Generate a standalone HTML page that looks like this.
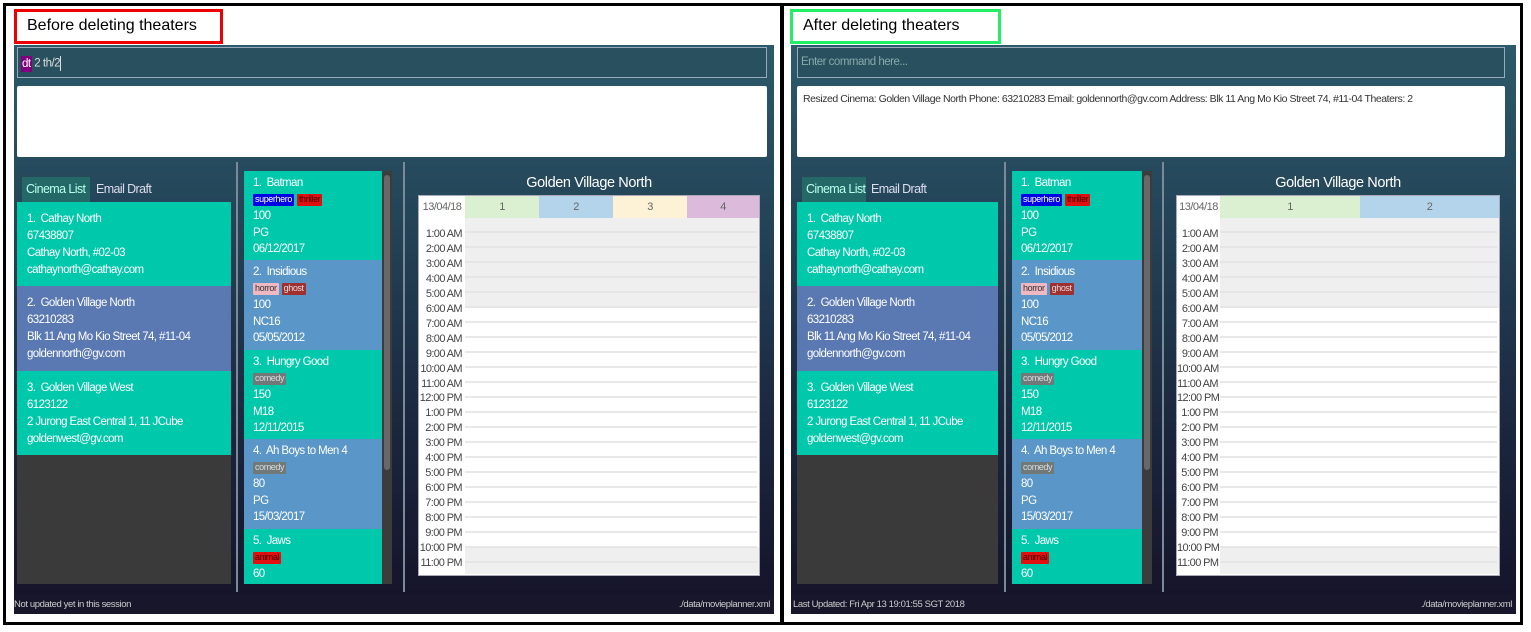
<!DOCTYPE html>
<html><head><meta charset="utf-8"><style>
*{margin:0;padding:0;box-sizing:border-box}
html{overflow:hidden;width:1531px;height:632px}
body{width:1531px;height:632px;background:#fff;position:relative;overflow:hidden;font-family:"Liberation Sans",sans-serif;white-space:nowrap}
.a{position:absolute}
.frame{left:3px;top:3px;width:1520px;height:622px;border:3px solid #000}
.div{left:780px;top:3px;width:4px;height:622px;background:#000}
.lbl{top:9px;height:35px;border:3px solid;font-size:16px;color:#000;padding:5px 0 0 10px}
.app{top:45px;height:569px;background:linear-gradient(#2c5a6a 0%,#244458 30%,#1b2840 65%,#151228 100%)}
.cmd{height:31px;border:1px solid #9ab;background:#28505f;font-size:11.5px;letter-spacing:-0.5px;color:#ddd;padding:8px 0 0 3px}
.res{height:71px;background:#fff;border-radius:2px;font-size:10.5px;letter-spacing:-0.45px;color:#333;padding:7px 6px}
.sep{top:162px;width:2px;height:430px;background:#7a8a96}
.tab{top:177px;height:25px;background:#246868;color:#bfe;font-size:12.5px;letter-spacing:-0.6px;padding:5px 0 0 4px}
.tab2{top:177px;font-size:12.5px;letter-spacing:-0.6px;color:#dde;padding-top:5px}
.list{top:202px;height:382px;background:#3a3a3a;overflow:hidden}
.c{position:absolute;left:0;right:0;color:#fff;font-size:11.5px;letter-spacing:-0.6px;line-height:17px;padding:9px 0 0 10px;overflow:hidden}
.t{background:#00c8aa}.b{background:#5a78b2}.m{background:#5a96c8}
.mv{top:171px;height:413px;overflow:hidden}
.mc{position:absolute;left:0;right:0;color:#fff;font-size:11.5px;letter-spacing:-0.6px;line-height:16.5px;padding:4px 0 0 9px;overflow:hidden}
.tg{display:inline-block;font-size:9px;letter-spacing:-0.4px;line-height:11px;height:12px;padding:0 2px;margin:2px 3px 2px 0;vertical-align:top;color:#fff;border-radius:1px}
.sb{top:171px;width:10px;height:413px;background:#3c3c3c}
.th{top:175px;width:6px;height:295px;background:#686868;border-radius:3px}
.ttl{top:175px;font-size:14.5px;letter-spacing:-0.4px;color:#fff;text-align:center}
.tbl{top:195px;height:381px;background:#fff;border:1px solid #aab;overflow:hidden}
.hd{position:absolute;top:0;height:22px;font-size:11px;letter-spacing:-0.5px;color:#666;text-align:center;line-height:22px}
.grid{position:absolute;top:22px;bottom:2px;right:2px;background:repeating-linear-gradient(#fff 0 13px,#e8e8e8 13px 15px)}
.gr{position:absolute;left:0;right:0;background:rgba(225,225,225,.55)}
.tm{position:absolute;top:31px;font-size:11px;letter-spacing:-0.6px;color:#444;text-align:right;line-height:14.95px}
.st{top:593px;height:21px;background:#17162a}
.stt{top:599px;font-size:9.5px;letter-spacing:-0.4px;color:#ccc}
</style></head><body>
<div class="a frame"></div>
<div class="a div"></div>
<div class="a lbl" style="left:14px;width:209px;border-color:#e00">Before deleting theaters</div>
<div class="a lbl" style="left:790px;width:211px;border-color:#2e6">After deleting theaters</div>

<!-- LEFT -->
<div class="a app" style="left:14px;width:760px"></div>
<div class="a cmd" style="left:17px;top:47px;width:750px"><span style="background:#800080;color:#fff;padding:2px 1px">dt</span> 2 th/2<span style="display:inline-block;width:1px;height:15px;background:#ddd;vertical-align:middle"></span></div>
<div class="a res" style="left:17px;top:86px;width:750px"></div>
<div class="a sep" style="left:236px"></div>
<div class="a sep" style="left:403px"></div>
<div class="a tab" style="left:22px;width:68px">Cinema List</div>
<div class="a tab2" style="left:96px">Email Draft</div>
<div class="a list" style="left:17px;width:214px">
<div class="c t" style="top:0;height:84px">1.&nbsp; Cathay North<br>67438807<br>Cathay North, #02-03<br>cathaynorth@cathay.com</div>
<div class="c b" style="top:84px;height:85px">2.&nbsp; Golden Village North<br>63210283<br>Blk 11 Ang Mo Kio Street 74, #11-04<br>goldennorth@gv.com</div>
<div class="c t" style="top:169px;height:84px">3.&nbsp; Golden Village West<br>6123122<br>2 Jurong East Central 1, 11 JCube<br>goldenwest@gv.com</div>
</div>
<div class="a mv" style="left:244px;width:138px">
<div class="mc t" style="top:0;height:89px">1.&nbsp; Batman<br><span class="tg" style="background:#0000e6">superhero</span><span class="tg" style="background:#e01010;color:#400">thriller</span><br>100<br>PG<br>06/12/2017</div>
<div class="mc m" style="top:89px;height:90px">2.&nbsp; Insidious<br><span class="tg" style="background:#f0b8c0;color:#333">horror</span><span class="tg" style="background:#a03030;color:#ddd">ghost</span><br>100<br>NC16<br>05/05/2012</div>
<div class="mc t" style="top:179px;height:89px">3.&nbsp; Hungry Good<br><span class="tg" style="background:#707878;color:#ddd">comedy</span><br>150<br>M18<br>12/11/2015</div>
<div class="mc m" style="top:268px;height:90px">4.&nbsp; Ah Boys to Men 4<br><span class="tg" style="background:#707878;color:#ddd">comedy</span><br>80<br>PG<br>15/03/2017</div>
<div class="mc t" style="top:358px;height:60px">5.&nbsp; Jaws<br><span class="tg" style="background:#e01010;color:#400">animal</span><br>60</div>
</div>
<div class="a sb" style="left:382px"></div><div class="a th" style="left:384px"></div>
<div class="a ttl" style="left:418px;width:342px">Golden Village North</div>
<div class="a tbl" style="left:418px;width:342px">
<div class="hd" style="left:0;width:46px">13/04/18</div>
<div class="hd" style="left:46px;width:74px;background:#daf0d0">1</div>
<div class="hd" style="left:120px;width:74px;background:#b4d4ec">2</div>
<div class="hd" style="left:194px;width:74px;background:#fdf2d6">3</div>
<div class="hd" style="left:268px;width:72px;background:#dcbadc">4</div>
<div class="grid" style="left:46px"></div>
<div class="gr" style="left:46px;top:22px;height:90px"></div>
<div class="gr" style="left:46px;top:351px;height:27px"></div>
<div class="tm" style="left:0;width:43px">1:00 AM<br>2:00 AM<br>3:00 AM<br>4:00 AM<br>5:00 AM<br>6:00 AM<br>7:00 AM<br>8:00 AM<br>9:00 AM<br>10:00 AM<br>11:00 AM<br>12:00 PM<br>1:00 PM<br>2:00 PM<br>3:00 PM<br>4:00 PM<br>5:00 PM<br>6:00 PM<br>7:00 PM<br>8:00 PM<br>9:00 PM<br>10:00 PM<br>11:00 PM</div>
</div>
<div class="a st" style="left:14px;width:760px"></div>
<div class="a stt" style="left:14px">Not updated yet in this session</div>
<div class="a stt" style="left:600px;width:170px;text-align:right">./data/movieplanner.xml</div>

<!-- RIGHT -->
<div class="a app" style="left:791px;width:725px"></div>
<div class="a cmd" style="left:797px;top:47px;width:708px;color:#8aa">Enter command here...</div>
<div class="a res" style="left:797px;top:86px;width:708px">Resized Cinema: Golden Village North Phone: 63210283 Email: goldennorth@gv.com Address: Blk 11 Ang Mo Kio Street 74, #11-04 Theaters: 2</div>
<div class="a sep" style="left:1004px"></div>
<div class="a sep" style="left:1162px"></div>
<div class="a tab" style="left:802px;width:64px">Cinema List</div>
<div class="a tab2" style="left:871px">Email Draft</div>
<div class="a list" style="left:797px;width:201px">
<div class="c t" style="top:0;height:84px">1.&nbsp; Cathay North<br>67438807<br>Cathay North, #02-03<br>cathaynorth@cathay.com</div>
<div class="c b" style="top:84px;height:85px">2.&nbsp; Golden Village North<br>63210283<br>Blk 11 Ang Mo Kio Street 74, #11-04<br>goldennorth@gv.com</div>
<div class="c t" style="top:169px;height:84px">3.&nbsp; Golden Village West<br>6123122<br>2 Jurong East Central 1, 11 JCube<br>goldenwest@gv.com</div>
</div>
<div class="a mv" style="left:1012px;width:130px">
<div class="mc t" style="top:0;height:89px">1.&nbsp; Batman<br><span class="tg" style="background:#0000e6">superhero</span><span class="tg" style="background:#e01010;color:#400">thriller</span><br>100<br>PG<br>06/12/2017</div>
<div class="mc m" style="top:89px;height:90px">2.&nbsp; Insidious<br><span class="tg" style="background:#f0b8c0;color:#333">horror</span><span class="tg" style="background:#a03030;color:#ddd">ghost</span><br>100<br>NC16<br>05/05/2012</div>
<div class="mc t" style="top:179px;height:89px">3.&nbsp; Hungry Good<br><span class="tg" style="background:#707878;color:#ddd">comedy</span><br>150<br>M18<br>12/11/2015</div>
<div class="mc m" style="top:268px;height:90px">4.&nbsp; Ah Boys to Men 4<br><span class="tg" style="background:#707878;color:#ddd">comedy</span><br>80<br>PG<br>15/03/2017</div>
<div class="mc t" style="top:358px;height:60px">5.&nbsp; Jaws<br><span class="tg" style="background:#e01010;color:#400">animal</span><br>60</div>
</div>
<div class="a sb" style="left:1142px"></div><div class="a th" style="left:1144px"></div>
<div class="a ttl" style="left:1176px;width:324px">Golden Village North</div>
<div class="a tbl" style="left:1176px;width:324px">
<div class="hd" style="left:0;width:43px">13/04/18</div>
<div class="hd" style="left:43px;width:140px;background:#daf0d0">1</div>
<div class="hd" style="left:183px;width:139px;background:#b4d4ec">2</div>
<div class="grid" style="left:43px"></div>
<div class="gr" style="left:43px;top:22px;height:90px"></div>
<div class="gr" style="left:43px;top:351px;height:27px"></div>
<div class="tm" style="left:0;width:41px">1:00 AM<br>2:00 AM<br>3:00 AM<br>4:00 AM<br>5:00 AM<br>6:00 AM<br>7:00 AM<br>8:00 AM<br>9:00 AM<br>10:00 AM<br>11:00 AM<br>12:00 PM<br>1:00 PM<br>2:00 PM<br>3:00 PM<br>4:00 PM<br>5:00 PM<br>6:00 PM<br>7:00 PM<br>8:00 PM<br>9:00 PM<br>10:00 PM<br>11:00 PM</div>
</div>
<div class="a st" style="left:791px;width:725px"></div>
<div class="a stt" style="left:793px">Last Updated: Fri Apr 13 19:01:55 SGT 2018</div>
<div class="a stt" style="left:1340px;width:172px;text-align:right">./data/movieplanner.xml</div>
</body></html>
